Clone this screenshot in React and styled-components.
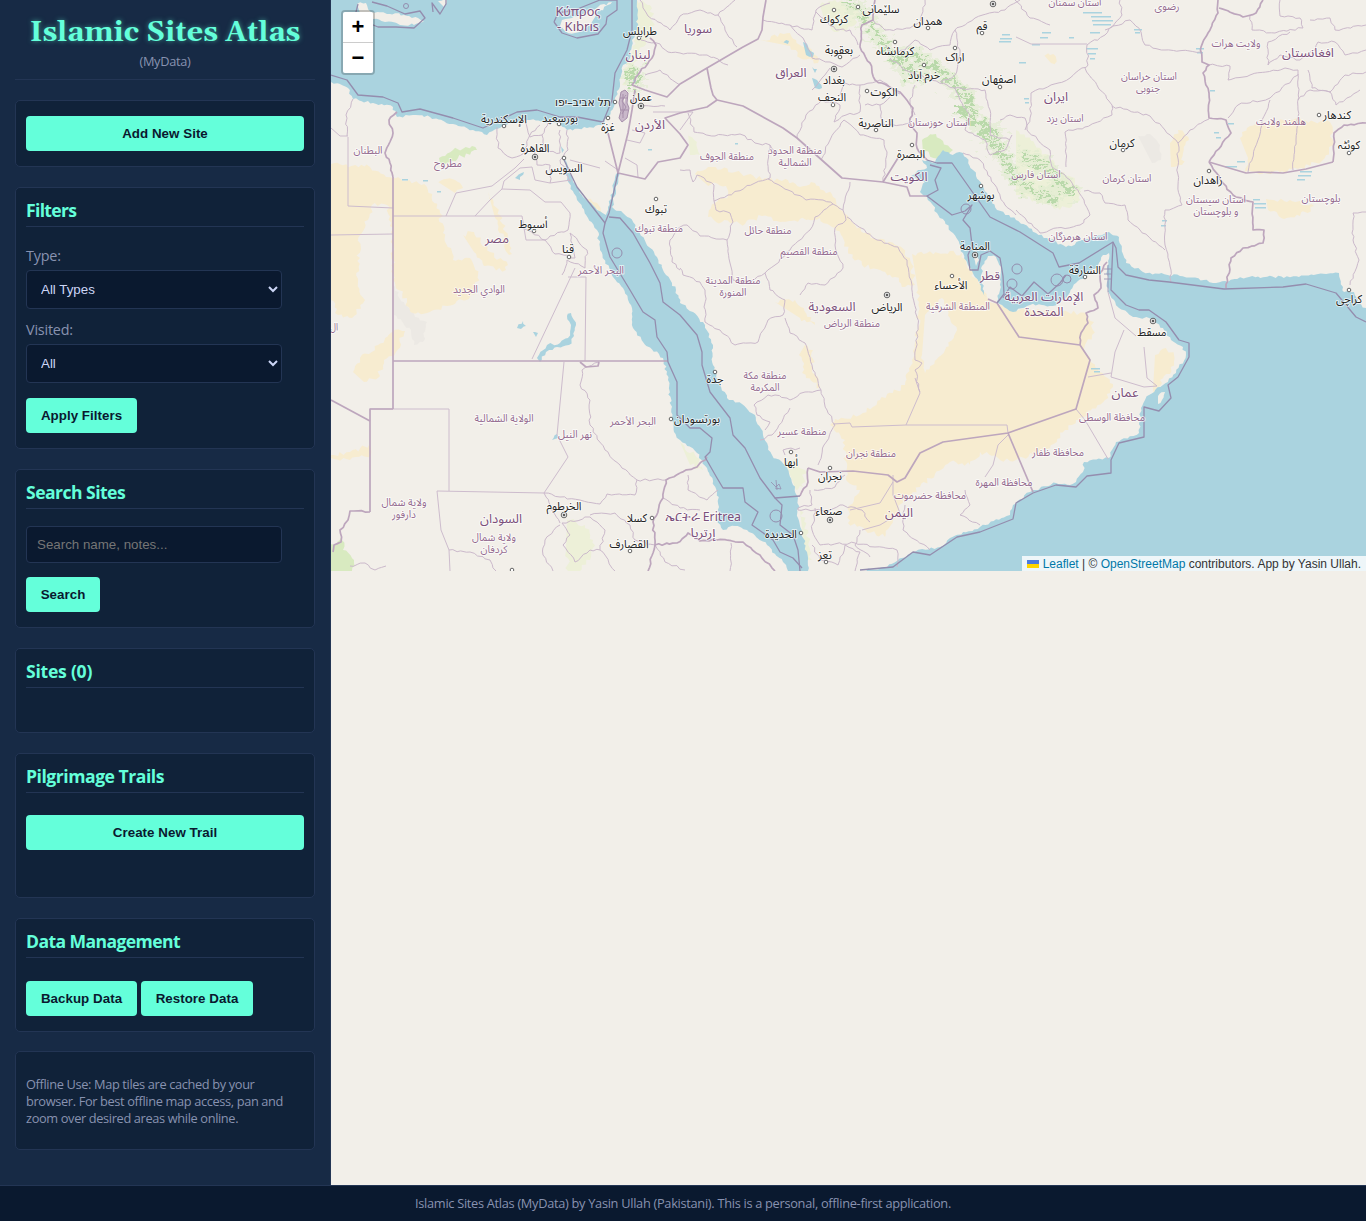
import React from 'react';
import styled, { createGlobalStyle, css } from 'styled-components';

const color = {
  ink: '#0a192f',
  panel: '#172a45',
  card: '#102239',
  line: '#233554',
  mint: '#64ffda',
  slate: '#8892b0',
  light: '#ccd6f6',
  land: '#f2efe9',
  water: '#aad3df',
};

const GlobalStyle = createGlobalStyle`
  *, *::before, *::after { box-sizing: border-box; }
  body { margin: 0; background: ${color.ink}; font-family: "Open Sans", "Noto Sans", sans-serif; }
`;

const Page = styled.div`
  display: flex;
  flex-direction: column;
  width: 1366px;
  height: 1221px;
`;
const Columns = styled.div`
  display: flex;
  height: 1185px;
`;
const Sidebar = styled.aside`
  width: 331px;
  padding: 0 15px;
  background: ${color.panel};
  border-right: 1px solid ${color.line};
`;
const Header = styled.header`
  height: 80px;
  margin-bottom: 20px;
  padding-top: 14px;
  text-align: center;
  border-bottom: 1px solid ${color.line};
`;
const Title = styled.h1`
  margin: 0;
  font: bold 28.8px/38px Gelasio, Georgia, "DejaVu Serif", serif;
  white-space: nowrap;
  color: ${color.mint};
  text-shadow: 0 0 5px rgba(100, 255, 218, 0.5);
`;
const Subtitle = styled.p`
  margin: 0;
  font-size: 12.8px;
  line-height: 18px;
  letter-spacing: -0.3px;
  color: ${color.slate};
`;
const Card = styled.section`
  height: ${(p) => p.$height}px;
  margin-bottom: ${(p) => p.$gap ?? 20}px;
  padding: 10px;
  background: ${color.card};
  border: 1px solid ${color.line};
  border-radius: 5px;
`;
const Heading = styled.h3`
  height: 29px;
  margin: 0;
  font-size: 17.6px;
  font-weight: 700;
  line-height: 25px;
  letter-spacing: ${(p) => p.$track ?? -0.55}px;
  color: ${color.mint};
  border-bottom: 1px solid ${color.line};
`;
const Label = styled.label`
  display: block;
  height: 20px;
  margin-top: ${(p) => p.$top}px;
  font-size: 14.4px;
  line-height: 20px;
  letter-spacing: -0.2px;
  color: ${color.slate};
`;
const field = css`
  display: block;
  width: 256px;
  font: 13.333px "Liberation Sans", Arial, sans-serif;
  color: ${color.light};
  background: ${color.ink};
  border: 1px solid ${color.line};
  border-radius: 4px;
`;
const Select = styled.select`
  ${field}
  height: 39px;
  margin-top: 4px;
  padding: 10px;
`;
const Input = styled.input`
  ${field}
  height: 37px;
  margin-top: 17px;
  padding: 10px;
  &::placeholder { color: #757575; }
`;
const Button = styled.button`
  display: block;
  width: ${(p) => (p.$width ? `${p.$width}px` : '100%')};
  height: 35px;
  margin-top: ${(p) => p.$top ?? 0}px;
  padding: 0;
  font: bold 13.333px "Liberation Sans", Arial, sans-serif;
  letter-spacing: 0.04px;
  white-space: nowrap;
  color: ${color.ink};
  background: ${color.mint};
  border: 0;
  border-radius: 4px;
`;
const ButtonRow = styled.div`
  display: flex;
  gap: 4px;
`;
const Note = styled.p`
  margin: 14px 0 0;
  font-size: 12.8px;
  line-height: 17px;
  letter-spacing: -0.36px;
  white-space: nowrap;
  color: ${color.slate};
`;
const MapPane = styled.main`
  flex: 1;
  background: ${color.land};
`;
const MapView = styled.div`
  position: relative;
  width: 1035px;
  height: 571px;
  overflow: hidden;
`;
const MapSvg = styled.svg`
  display: block;
`;
const ZoomBox = styled.div`
  position: absolute;
  top: 10px;
  left: 10px;
  width: 34px;
  border: 2px solid rgba(0, 0, 0, 0.2);
  border-radius: 4px;
  background-clip: padding-box;
`;
const ZoomButton = styled.button`
  display: block;
  width: 30px;
  height: ${(p) => (p.$first ? 31 : 30)}px;
  padding: 0;
  font: bold 22px/30px "Liberation Sans", sans-serif;
  color: #000;
  background: #fff;
  border: 0;
  border-bottom: ${(p) => (p.$first ? '1px solid #ccc' : '0')};
  border-radius: ${(p) => (p.$first ? '2px 2px 0 0' : '0 0 2px 2px')};
`;
const Attribution = styled.div`
  position: absolute;
  right: 0;
  bottom: 0;
  height: 15px;
  padding: 0 5px;
  font: 12px/16px "Liberation Sans", Arial, sans-serif;
  white-space: nowrap;
  color: #333;
  background: rgba(255, 255, 255, 0.8);
`;
const MapLink = styled.a`
  color: #0078a8;
`;
const Flag = styled.svg`
  margin-right: 4px;
`;
const Footer = styled.footer`
  flex: 1;
  padding-top: 8px;
  text-align: center;
  font-size: 12.8px;
  line-height: 19px;
  letter-spacing: -0.3px;
  color: ${color.slate};
  background: ${color.ink};
  border-top: 1px solid ${color.line};
`;

const seas = [
  '331,0 637,0 638,10 637,27 632,40 630,58 623,65 620,83 615,103 608,117 602,125 587,128 567,130 560,124 547,123 530,120 517,123 503,125 487,135 473,130 453,124 430,117 413,115 397,117 393,107 373,103 353,99 348,88 331,82',
  '564,157 567,180 577,200 588,218 597,230 600,250 613,277 623,288 632,308 633,328 643,342 663,358 668,380 672,418 674,432 680,440 697,453 707,468 717,492 719,507 717,520 723,530 735,526 747,530 767,545 783,562 788,571 808,571 807,552 798,518 798,498 793,485 787,468 772,455 763,435 755,415 742,404 727,398 720,385 713,365 713,345 705,325 693,312 680,303 676,290 672,283 663,270 657,257 646,243 637,230 630,218 623,213 612,207 616,190 619,172 616,174 608,210 606,215 597,210 583,197 573,182 567,163',
  '860,571 887,567 913,552 940,547 950,538 980,527 1010,515 1013,505 1030,492 1036,490 1056,483 1070,485 1076,482 1083,472 1084,462 1109,458 1116,442 1139,433 1141,408 1149,395 1163,385 1176,373 1186,355 1183,347 1171,340 1163,328 1149,318 1136,317 1119,308 1108,292 1107,267 1109,253 1103,255 1099,263 1086,277 1076,283 1066,298 1053,306 1030,305 1013,312 1002,305 997,302 1000,290 1001,270 996,257 988,256 982,266 981,280 986,297 975,277 963,253 953,233 937,213 927,197 920,192 925,182 911,176 918,170 927,168 922,160 935,162 943,150 950,154 963,153 973,170 987,193 997,210 1016,220 1036,233 1066,247 1093,237 1109,232 1119,237 1126,263 1143,272 1180,276 1216,283 1249,277 1299,277 1339,273 1343,287 1344,292 1354,292 1358,303 1366,308 1366,571',
];
const islands = [
  '357,4 366,3 371,12 390,14 404,15 418,18 424,21 414,25 400,25 385,22 373,19 360,13',
  '562,20 572,18 585,12 612,2 596,14 592,22 586,28 575,33 565,31 560,26',
  '1158,396 1165,392 1162,400 1158,404',
  '438,1 447,0 444,7', '976,250 979,260 976,266 974,258',
];
const sands = [
  '331,164 370,167 393,178 398,177 427,187 440,213 443,233 453,260 470,258 478,275 474,295 427,313 410,315 407,302 393,280 393,235 387,205 372,205 368,220 360,235 358,282 365,300 352,318 338,315 331,300',
  '331,455 350,452 369,445 371,455 350,460 331,458',
  '353,372 360,358 378,345 392,332 405,331 396,352 384,360 378,378 364,382',
  '463,235 474,232 490,252 508,265 506,270 484,266 474,252',
  '488,192 500,215 512,254 509,255 495,218',
  '435,180 455,180 463,188 455,193',
  '586,195 593,202 603,213 598,212 590,205',
  '760,40 790,33 800,45 812,50 818,63 800,58 790,46',
  '695,174 712,167 735,172 768,179 788,180 800,187 815,183 833,197 847,215 855,225 877,240 898,246 910,258 915,285 905,287 895,277 880,270 862,265 848,250 835,228 820,218 800,219 780,222 762,216 745,224 722,222 708,217 715,203 728,195 726,186 705,183',
  '912,254 962,253 975,278 990,302 1019,310 1086,313 1094,322 1092,335 1085,345 1090,360 1113,384 1105,400 1076,420 1065,430 1050,448 1016,460 1000,460 980,452 970,465 950,462 935,474 920,487 903,500 893,520 885,537 865,530 848,523 850,505 860,490 846,480 845,440 830,425 835,419 860,415 880,400 905,385 912,360 918,330 918,290',
  '1240,138 1250,126 1290,120 1330,122 1333,145 1322,161 1298,169 1280,172 1245,172 1248,158',
  '1266,199 1290,200 1314,206 1300,216 1284,219 1268,210',
  '1170,143 1178,130 1184,133 1189,140 1183,153 1182,165 1171,167',
  '1042,53 1050,55 1061,61 1051,63', '1155,355 1166,348 1174,355 1170,374 1160,380 1158,394 1153,390',
  '805,345 813,350 812,370 820,388 806,378 799,355',
  '775,302 795,300 815,325 800,318',
];
const greens = [
  '439,158 453,150 472,146 477,150 458,158 440,163',
  '922,140 936,134 943,141 953,150 940,158 923,152',
  '331,548 341,537 343,550 354,560 352,571 331,571',
];
const paleGreens = [
  '567,520 585,525 593,540 590,560 580,571 568,571 566,550',
  '785,462 795,458 805,470 803,487 796,490', '688,132 697,142 700,155 690,155',
  '680,442 695,455 703,470 690,465', '800,510 808,530 812,560 805,555',
  '637,0 650,5 655,25 645,40 638,60 628,80 622,85 628,60 636,35', '820,5 835,0 860,8 855,25 838,32 825,22',
  '1016,130 1040,148 1055,165 1075,182 1080,200 1060,210 1035,200 1016,195',
];
const mountains = [
  '845,0 862,12 874,30 888,50 905,70 925,80',
  '895,60 915,55 935,68 950,80 968,98 975,118 990,140 1004,158 1016,180 1035,192 1060,200',
  '960,110 980,125 995,130 1002,150', '1020,155 1045,165 1055,180 1075,195', '625,78 634,70 638,80 630,88',
];

const countryBorders = [
  '393,409 370,409 370,512', '393,177 393,409',
  '393,361 668,361', '580,362 586,367 598,366 599,362', '331,400 370,421',
  '608,133 618,173 628,133 632,110 635,90',
  '618,173 645,179 658,162 680,158 688,145 680,134 665,118 680,113 707,107 717,100',
  '717,100 713,95 711,88 707,68 680,84 667,97 645,90 632,85',
  '707,68 743,47 758,39 762,30 763,17 766,0',
  '717,100 743,106 783,128 797,138 842,178 883,182 898,158', '883,182 907,187 910,196 927,196',
  '1209,162 1246,173 1259,172 1283,173 1306,169 1333,162',
  '808,468 820,472 853,471 888,475 897,482 905,478 920,453 943,442 1008,433 1076,409 1090,360 1080,345 1019,337 997,303 988,299',
  '1008,433 1033,492',
];
const raggedBorders = [
  '397,112 389,120 393,133 385,153 390,163 393,177',
  '370,512 350,511 348,520 340,530 341,542 334,545 333,552',
  '632,85 640,72 652,58 656,45 650,38',
  '875,0 873,20 862,25 860,47 870,63 875,80 900,92 913,108 910,123 917,133 917,148 927,160',
  '1218,0 1218,13 1208,33 1201,47 1202,62 1209,65 1203,73 1209,93 1209,118 1226,120 1231,133 1209,162',
  '1333,162 1334,133 1344,125 1366,123',
  '1219,8 1243,17 1256,13 1263,0', '1209,162 1223,183 1233,195 1253,202 1253,230 1264,230 1263,243 1243,248 1231,258 1226,288',
  '800,496 808,482 808,468', '1080,345 1081,333 1088,323 1086,313 1098,308 1094,295 1101,288 1100,273 1107,262',
  '680,473 666,480 663,498 653,522 655,545 648,571', '707,457 697,467 680,473',
  '655,545 677,543 688,533 700,541 717,540 743,542 760,555 775,571',
];
const seaBorders = [
  '331,75 347,80 358,95 383,97 398,103 402,112 420,109 453,118 483,128 500,120 517,112 537,110 560,117 577,117 603,122 612,100 615,73 627,50 632,30 632,0',
  '358,4 356,12 366,22 378,27 396,27 414,28 425,18 420,11 405,14 387,6 372,2',
  '554,22 562,33 577,38 598,34 606,24 607,17 617,10 617,0 600,0 575,10 558,13 554,22',
  '433,12 432,3 440,14 446,4 446,0',
  '564,160 577,187 605,223 609,213 618,173', '605,223 603,233 610,257 630,290 643,312 655,320 657,337 667,352 668,362 677,382 677,415 690,428 700,428 712,438 710,452 705,457 717,478 723,488 743,488 745,502 758,512 752,525 773,540 780,552 793,558 802,568',
  '609,217 620,218 633,233 650,263 660,283 663,302 680,315 697,335 702,352 702,365 710,392 730,418 733,435 745,448 760,478 775,498 800,496', '775,498 782,505 780,525 793,535 798,550 800,571',
  '927,160 937,163 952,163 990,217 1020,232 1053,253 1059,267 1079,263 1113,242 1116,248 1118,267 1126,275 1149,280 1169,282 1224,289 1283,287 1306,284 1336,293 1356,317 1366,322',
  '930,165 941,168 935,180 938,190 927,196 952,215 965,211 972,205 963,220 970,228 972,245 968,255 970,270 978,270 981,255 990,251 1000,258 1003,276 1004,294 997,303',
  '1003,298 1010,287 1022,296 1034,282 1048,294 1060,283 1066,275', '1113,242 1111,290 1126,305 1139,310 1149,310 1166,322 1179,340 1189,343 1189,357 1178,377 1168,385 1171,398 1159,411 1144,407 1144,437 1119,443 1111,460 1111,473 1087,476 1076,487 1056,485 1033,493 1016,503 1013,519 980,532 957,537 930,555 913,552 893,567 860,570',
];
const rings = [[617, 253, 5], [776, 516, 6], [966, 209, 5], [1017, 269, 5], [1012, 284, 5], [1057, 280, 6], [1067, 279, 4], [406, 6, 2.5]];
const straightProvinces = [
  '393,216 522,216 526,240 545,240', '331,235 393,234', '348,137 348,206 393,208', '331,128 340,136 348,136', '370,409 449,409 449,491',
  '437,491 544,493 568,457 557,435 564,362', '585,361 586,277 568,277', '532,359 567,285 575,268', '437,491 441,530 449,550 450,571',
  '446,216 456,193 492,186 515,168 524,159', '475,216 490,200 502,189 530,190 545,202 561,202 570,213', '502,189 504,181 520,168 532,167 535,180 550,183 571,180',
  '906,425 920,393 915,378', '906,425 852,427 850,423 833,424', '1008,433 1007,425 906,425', '1076,409 1085,420 1108,459', '1008,435 998,445 993,465 985,477',
  '1144,347 1147,378 1157,386 1144,387 1111,377 1115,352 1124,330', '1088,377 1111,373', '1108,292 1115,318 1136,336',
  '605,161 618,170', '570,160 600,168', '893,475 893,495 900,513 880,525 862,530', '893,482 880,503 850,510', '1016,37 1031,44 1087,44',
  '653,112 693,112 680,130', '632,130 645,133 640,143 627,140', '625,158 637,165 638,177',
];
const provinces = [
  '353,99 346,115 347,136', '497,127 498,148 512,158 524,153 530,135 540,125', '525,120 530,137 542,135 548,122', '542,135 545,150 560,153 560,130', '567,130 568,150 560,160 570,182', '535,150 537,165 550,165 550,183',
  '570,213 568,230 550,236 545,240 520,225', '545,240 555,254 575,258 570,233 587,250 585,268 567,260 562,275',
  '640,0 648,16 670,30 680,16', '641,40 660,44 668,52 680,53', '645,75 660,70 680,85', '637,105 665,106',
  '680,16 700,10 718,15 735,0', '718,15 725,30 737,47', '680,53 707,55 728,65',
  '763,20 790,25 805,42 812,58 830,62 842,67 860,55', '790,25 812,30 816,10 830,3', '816,12 836,30 850,30 858,45',
  '812,90 822,78 830,68', '822,100 806,115 797,138', '822,100 840,105 834,122 846,115 860,112 860,85 845,83 840,95', '821,160 830,140 844,120 860,135 884,140 887,152 883,182',
  '860,85 880,80 900,94', '880,105 882,125 900,125 910,123', '865,105 880,105 890,97',
  '688,113 694,132 715,136 740,134 755,143 770,145 776,152', '770,145 768,160 770,178 755,183 728,195 714,201 714,185 697,175 693,182 690,170 680,170',
  '768,179 788,190 806,200 823,200 833,204 843,210 850,182', '714,201 716,210 730,213 733,222 727,240 700,236 687,225 680,227 670,240 672,262 680,270',
  '833,204 815,217 810,230 790,250 775,265 765,273 750,282 733,280 730,263 727,240', '843,210 846,220 835,228 835,245 843,268 825,285 808,283 800,295',
  '847,217 877,240 898,247 907,260 912,285 918,325 915,360 922,363 915,370 920,392', '680,268 683,275 700,282 705,290 705,322 720,330 735,345 758,342 768,320 783,315 785,300 770,290 765,273',
  '785,318 790,333 805,343 812,365 821,390 805,392 790,400 775,395 768,395 754,405 757,415 770,422 765,430', '821,390 827,410 835,425 824,445 818,465', '760,440 772,435 790,408', '785,455 783,450 800,448',
  '1015,0 1030,18 1050,25', '873,20 885,30 910,28 921,20 925,0', '885,45 890,55 905,50 915,40 930,50 950,45 955,30 975,18 1005,10 1020,0', '955,30 960,55 955,75 940,82', '890,58 905,70 925,78 955,88 960,100 970,115 965,130 985,140 990,155 1005,150 1012,135',
  '915,85 910,103 915,115', '955,88 985,90 990,110 990,135 1010,140', '1000,120 1010,115 1025,118 1027,130 1050,150 1052,167 1070,180 1084,200 1090,215 1080,225 1050,230 1040,233 1016,210',
  '963,153 980,160 995,185 1005,205 1016,215',
  '1120,0 1122,15 1105,35 1087,45 1088,65 1070,78 1031,93 1030,118 1025,130', '1105,30 1130,20 1141,32 1145,45 1165,50 1200,52', '1085,68 1112,105 1112,115 1085,127 1065,132 1066,167', '1112,106 1150,116 1165,130 1178,143 1190,130 1209,119', '1178,143 1178,185 1182,205 1165,210 1165,245 1171,270 1171,282', '1084,191 1100,193 1105,203 1125,205 1128,220 1140,230 1165,250',
  '1209,65 1230,66 1228,80 1250,75 1285,68 1298,70 1298,75 1270,98 1238,105 1228,118', '1250,15 1252,30 1275,33 1303,28 1300,18 1280,16 1280,0', '1290,32 1268,42 1268,65 1280,55 1300,60 1315,50 1318,42 1335,42 1345,55 1366,50', '1270,100 1262,120 1258,140 1248,172', '1298,74 1298,110 1296,140 1293,170', '1298,100 1310,90 1330,92 1336,105 1360,90', '1308,70 1312,88 1330,92 1345,75 1366,72', '1310,20 1330,18 1335,30 1366,25', '1366,212 1353,213 1353,240 1359,260 1350,285',
  '544,493 560,497 580,500 600,504 607,494 635,495 637,480', '599,362 582,370 580,385 590,400 590,425 605,450 620,465 637,480 666,480', '544,493 560,523', '562,523 590,517 605,530 600,550 615,571', '590,515 615,513 630,525 635,540 655,545', '560,525 545,540 543,555 553,571', '562,523 570,535 563,545 575,562 590,550 600,550', '449,550 470,552 490,560 496,571', '350,566 365,563 375,570 386,566',
  '663,498 680,508 700,510', '655,545 665,562 685,570', '688,475 688,490 707,500 718,490', '731,543 730,571', '810,490 812,505 798,508 798,510 830,510 840,505 862,510 870,522', '814,490 835,487 845,475', '815,508 812,530 820,545 855,543 875,547 897,550 897,567', '812,545 820,560 838,565 845,545 860,552 855,571', '905,505 903,530 930,550', '965,490 970,505 960,515 980,525', '860,530 855,545 870,557',
];
const lakes = [
  '517,328 523,321 526,326 521,329', '533,332 538,333 536,337', '537,358 547,345 560,343 568,338 571,325 567,316 571,313 576,325 574,336 569,345 557,347 546,352 540,362', '552,440 557,434 558,438',
  '803,42 808,46 814,53 813,57 806,55', '812,78 817,80 822,88 815,88', '780,41 789,41 788,44', '515,178 524,172 520,180', '633,80 636,80 635,84', '812,67 817,69 815,73',
  '561,146 564,150 562,153',
];
const playas = [[1090, 12, 12], [1091, 16, 20], [1092, 20, 21], [1093, 24, 18], [1083, 12, 7], [1090, 32, 10], [1042, 32, 9], [1040, 37, 8], [1069, 37, 5], [1086, 48, 12], [1088, 53, 8], [1090, 58, 5], [1032, 44, 8], [1025, 102, 4], [1024, 98, 5], [1134, 29, 8], [1135, 32, 5], [1196, 48, 8], [1197, 52, 6], [1210, 90, 5], [1228, 123, 6], [1214, 132, 5], [1216, 137, 5], [1225, 166, 12], [1237, 161, 8], [1300, 171, 12], [1298, 175, 13], [1297, 179, 8], [1253, 199, 7], [1254, 203, 12], [1255, 207, 11], [1162, 220, 5], [1161, 225, 5], [1002, 34, 8], [1000, 38, 12], [999, 41, 12], [1091, 368, 9], [1094, 371, 6], [1019, 62, 7], [735, 143, 3], [648, 149, 4], [402, 179, 6], [423, 180, 5], [437, 191, 4]];

/* [text, centre x, centre y, width] */
const countries = [
  ['Κύπρος', 578, 12, 45], ['- Kıbrıs', 578, 27, 42], ['لبنان', 638, 55, 25], ['الأردن', 650, 125, 30], ['سوريا', 698, 29, 28], ['العراق', 791, 73, 31],
  ['ایران', 1056, 97, 24], ['افغانستان', 1308, 53, 52], ['الكويت', 909, 177, 37], ['قطر', 990, 276, 20], ['مصر', 497, 239, 24], ['السعودية', 832, 307, 47],
  ['الإمارات العربية', 1044, 297, 79], ['المتحدة', 1044, 312, 39], ['عمان', 1125, 393, 27], ['اليمن', 899, 513, 28], ['السودان', 501, 519, 42], ['ኤርትራ Eritrea', 703, 517, 76], ['إرتريا', 703, 533, 25],
];
const regions = [
  ['البطنان', 368, 151, 29], ['مطروح', 448, 164, 28], ['الوادي الجديد', 479, 290, 52], ['البحر الأحمر', 601, 271, 46], ['منطقة تبوك', 659, 229, 48], ['ال', 334, 328, 8],
  ['منطقة الجوف', 727, 157, 54], ['منطقة الحدود', 795, 151, 54], ['الشمالية', 795, 163, 33], ['منطقة حائل', 768, 231, 47], ['منطقة القصيم', 809, 252, 57], ['منطقة المدينة', 733, 281, 55], ['المنورة', 733, 293, 27],
  ['استان خوزستان', 939, 123, 62], ['استان سمنان', 1075, 3, 53], ['رضوی', 1167, 7, 25], ['ولايت هرات', 1236, 44, 49], ['استان خراسان', 1149, 77, 56], ['جنوبی', 1148, 89, 24], ['استان یزد', 1065, 119, 37],
  ['هلمند ولايت', 1281, 122, 50], ['استان فارس', 1036, 175, 49], ['استان کرمان', 1127, 179, 49], ['استان سیستان', 1216, 200, 60], ['و بلوچستان', 1216, 212, 45], ['بلوچستان', 1321, 199, 39], ['استان هرمزگان', 1078, 237, 59],
  ['منطقة الرياض', 852, 324, 56], ['المنطقة الشرقية', 958, 307, 64], ['منطقة مكة', 765, 376, 43], ['المكرمة', 765, 388, 29], ['منطقة عسير', 802, 432, 49], ['منطقة نجران', 871, 454, 50],
  ['محافظة حضرموت', 930, 496, 72], ['محافظة المهرة', 1004, 483, 57], ['محافظة ظفار', 1058, 453, 52], ['محافظة الوسطى', 1112, 418, 66], ['الولاية الشمالية', 504, 419, 59], ['نهر النيل', 575, 435, 34], ['البحر الأحمر', 633, 422, 46],
  ['ولاية شمال', 404, 503, 45], ['دارفور', 404, 515, 24], ['ولاية شمال', 494, 538, 44], ['كردفان', 494, 550, 27],
];
/* [text, centre x, centre y, width, dot x, dot y, is capital] */
const cities = [
  ['طرابلس', 640, 31, 34, 639, 38], ['תל אביב–יפו', 583, 102, 56, 615, 102], ['عمان', 641, 97, 22, 641, 106, 1], ['بورسعيد', 560, 118, 36, 559, 124], ['الإسكندرية', 504, 119, 46, 504, 126],
  ['القاهرة', 535, 148, 29, 535, 157, 1], ['السويس', 564, 168, 37, 564, 158], ['غزة', 608, 127, 14, 608, 118], ['تبوك', 656, 209, 22, 656, 199], ['أسيوط', 533, 224, 29, 534, 231], ['قنا', 568, 249, 12, 569, 257],
  ['كركوك', 834, 19, 28, 834, 10], ['سلێمانی', 881, 9, 37, 858, 7], ['همدان', 928, 21, 29, 928, 28], ['قم', 982, 26, 11, 982, 33], ['بعقوبة', 839, 50, 28, 840, 57], ['کرمانشاه', 895, 51, 38, 895, 42],
  ['اراک', 955, 57, 19, 955, 48], ['بغداد', 834, 80, 22, 834, 69, 1], ['خرم آباد', 924, 75, 32, 924, 65], ['اصفهان', 999, 79, 34, 1000, 87], ['النجف', 832, 97, 28, 833, 105], ['الكوت', 884, 92, 27, 867, 91],
  ['الناصرية', 876, 123, 35, 876, 130], ['البصرة', 911, 154, 28, 912, 145], ['بوشهر', 981, 195, 27, 981, 186], ['المنامة', 975, 246, 30, 975, 255, 1], ['الأحساء', 951, 285, 33, 952, 276],
  ['کرمان', 1122, 143, 25, 1123, 150], ['زاهدان', 1208, 180, 29, 1209, 171], ['کندهار', 1337, 115, 28, 1319, 115], ['کوئٹہ', 1349, 145, 22, 1349, 153], ['الشارقة', 1085, 270, 32, 1085, 277],
  ['الرياض', 887, 307, 31, 887, 295, 1], ['جدة', 715, 379, 17, 715, 372], ['بورتسودان', 697, 419, 46, 671, 419], ['أبها', 791, 462, 14, 791, 452], ['نجران', 830, 476, 24, 830, 468], ['صنعاء', 829, 511, 27, 830, 520, 1],
  ['الحديدة', 781, 534, 32, 801, 533], ['تعز', 825, 555, 14, 826, 562], ['مسقط', 1152, 332, 29, 1153, 321, 1], ['کراچی', 1349, 299, 26, 1349, 290], ['الخرطوم', 564, 506, 35, 564, 515, 1],
  ['كسلا', 637, 518, 20, 652, 518], ['القضارف', 629, 544, 39, 630, 551],
];

/* Splits every segment into short steps and pushes the new points sideways. */
const jag = (points, amount, step = 4) => {
  const pts = points.split(' ').map((p) => p.split(',').map(Number));
  let seed = Math.round(pts[0][0] * 31 + pts[0][1] * 17 + pts.length);
  const rand = () => {
    seed = (seed * 1103515245 + 12345) % 2147483648;
    return seed / 2147483648 - 0.5;
  };
  const out = [pts[0]];
  for (let i = 1; i < pts.length; i += 1) {
    const [ax, ay] = pts[i - 1];
    const [bx, by] = pts[i];
    const onEdge = (ax === bx && (ax === 331 || ax === 1366)) || (ay === by && (ay === 0 || ay === 571));
    const len = Math.hypot(bx - ax, by - ay);
    const n = onEdge ? 1 : Math.max(1, Math.round(len / step));
    for (let k = 1; k < n; k += 1) {
      const off = rand() * 2 * amount;
      const t = (k + rand() * 0.5) / n;
      out.push([ax + (bx - ax) * t - ((by - ay) / len) * off, ay + (by - ay) * t + ((bx - ax) / len) * off]);
    }
    out.push([bx, by]);
  }
  return out.map(([x, y]) => `${x.toFixed(1)},${y.toFixed(1)}`).join(' ');
};

const Lines = ({ items, rough, ...rest }) => (
  <g fill="none" strokeLinejoin="round" {...rest}>
    {items.map((p, i) => <polyline key={i} points={rough ? jag(p, rough) : p} />)}
  </g>
);
const Areas = ({ items, rough = 1.5, ...rest }) => (
  <g {...rest}>{items.map((p, i) => <polygon key={i} points={jag(p, rough, 3)} />)}</g>
);
const Labels = ({ items, size, ...rest }) => (
  <g fontSize={size} textAnchor="middle" stroke="#fff" strokeOpacity="0.65" strokeWidth="2" strokeLinejoin="round" paintOrder="stroke"
    fontFamily='"Noto Sans Arabic", "Noto Sans", "DejaVu Sans", sans-serif' {...rest}>
    {items.map(([text, x, y, w], i) => (
      <text key={i} x={x} y={y + size * 0.33} textLength={w} lengthAdjust="spacingAndGlyphs">{text}</text>
    ))}
  </g>
);

const AtlasMap = () => (
  <MapSvg width="1035" height="571" viewBox="331 0 1035 571">
    <defs>
      <filter id="shred" filterUnits="userSpaceOnUse" x="331" y="0" width="1035" height="571">
        <feTurbulence type="fractalNoise" baseFrequency="0.12 0.2" numOctaves="3" seed="9" />
        <feDisplacementMap in="SourceGraphic" scale="26" xChannelSelector="R" yChannelSelector="G" />
      </filter>
    </defs>
    <rect x="331" width="1035" height="571" fill={color.land} />
    <Areas items={sands} rough={2.5} fill="#f7ecd0" />
    <Areas items={['925,315 942,298 950,318 957,330 945,350 925,373 922,355']} fill={color.land} />
    <Areas items={['393,285 405,305 415,317 427,322 423,342 414,345 411,330 394,315', '1138,136 1150,134 1160,145 1161,160 1152,163']} fill="#ece9e4" />
    <Areas items={paleGreens} rough={3} fill="#edf0d8" />
    <Areas items={greens} rough={2.5} fill="#d8eac0" />
    <Lines items={mountains} stroke="#e1ecd0" strokeWidth="16" opacity="0.6" filter="url(#shred)" />
    <Lines items={mountains} stroke="#b9d9aa" strokeWidth="6" strokeDasharray="9 3 4 2" filter="url(#shred)" />
    <Areas items={seas} rough={1.4} fill={color.water} />
    <Areas items={islands} fill={color.land} />
    <Areas items={lakes} fill={color.water} />
    <g fill={color.water}>
      {playas.map(([x, y, w], i) => <rect key={i} x={x} y={y} width={w} height="1.5" />)}
    </g>
    <Lines items={straightProvinces} stroke="#cdbccd" strokeWidth="1" />
    <Lines items={provinces} rough={1.2} stroke="#cbb9cb" strokeWidth="1" />
    <Lines items={countryBorders} stroke="#bda6bd" strokeWidth="1.7" />
    <Lines items={raggedBorders} rough={1} stroke="#bda6bd" strokeWidth="1.7" />
    <Lines items={seaBorders} stroke="#948dae" strokeWidth="1.3" />
    <g fill="none" stroke="#948dae">
      {rings.map(([x, y, r], i) => <circle key={i} cx={x} cy={y} r={r} />)}
      <path fill="#c9b8ca" stroke="#a78fab" d="M621 92l4-2 3 3-1 10 2 5-2 10-5 4-3-4 2-7-2-8zM623 94v24M626 95l-4 6 4 6-4 7M620 98h7M620 110h8" />
      <path d="M771 482l5 5 3-3 2 5-6-1M776 480l1 10" strokeWidth="0.8" />
      <path d="M1108 265v27M1104 269h8M1104 274h8M1104 279h8" strokeWidth="0.8" />
    </g>
    <Labels items={regions} size={10.5} fill="#93698f" />
    <Labels items={countries} size={12.5} fill="#7b4f7b" />
    <g fill="#fff" stroke="#555" strokeWidth="0.9">
      {cities.map(([, , , , x, y, capital], i) => (
        <g key={i}>
          <circle cx={x} cy={y} r={capital ? 2.8 : 1.8} />
          {capital && <circle cx={x} cy={y} r="1" fill="#333" />}
        </g>
      ))}
      <circle cx="993" cy="4" r="2.8" />
      <circle cx="993" cy="4" r="1" fill="#333" />
      <circle cx="512" cy="570" r="1.8" />
    </g>
    <Labels items={cities} size={11.5} fill="#222" />
  </MapSvg>
);

export default function App() {
  return (
    <>
      <GlobalStyle />
      <Page>
        <Columns>
          <Sidebar>
            <Header>
              <Title>Islamic Sites Atlas</Title>
              <Subtitle>(MyData)</Subtitle>
            </Header>
            <Card $height={67}>
              <Button $top={5}>Add New Site</Button>
            </Card>
            <Card $height={262}>
              <Heading $track={-0.7}>Filters</Heading>
              <Label $top={19}>Type:</Label>
              <Select defaultValue="all"><option value="all">All Types</option></Select>
              <Label $top={11}>Visited:</Label>
              <Select defaultValue="all"><option value="all">All</option></Select>
              <Button $top={15} $width={111}>Apply Filters</Button>
            </Card>
            <Card $height={159}>
              <Heading>Search Sites</Heading>
              <Input placeholder="Search name, notes..." />
              <Button $top={14} $width={74}>Search</Button>
            </Card>
            <Card $height={85}>
              <Heading $track={-0.25}>Sites (0)</Heading>
            </Card>
            <Card $height={145}>
              <Heading $track={-0.48}>Pilgrimage Trails</Heading>
              <Button $top={22}>Create New Trail</Button>
            </Card>
            <Card $height={114} $gap={19}>
              <Heading $track={-0.6}>Data Management</Heading>
              <ButtonRow>
                <Button $top={23} $width={111}>Backup Data</Button>
                <Button $top={23} $width={112}>Restore Data</Button>
              </ButtonRow>
            </Card>
            <Card $height={99}>
              <Note>
                Offline Use: Map tiles are cached by your<br />
                browser. For best offline map access, pan and<br />
                zoom over desired areas while online.
              </Note>
            </Card>
          </Sidebar>
          <MapPane>
            <MapView>
              <AtlasMap />
              <ZoomBox>
                <ZoomButton $first>+</ZoomButton>
                <ZoomButton>−</ZoomButton>
              </ZoomBox>
              <Attribution>
                <Flag width="12" height="8" viewBox="0 0 12 8">
                  <rect width="12" height="4" fill="#4c7be1" />
                  <rect y="4" width="12" height="4" fill="#ffd500" />
                </Flag>
                <MapLink>Leaflet</MapLink> | © <MapLink>OpenStreetMap</MapLink> contributors. App by Yasin Ullah.
              </Attribution>
            </MapView>
          </MapPane>
        </Columns>
        <Footer>Islamic Sites Atlas (MyData) by Yasin Ullah (Pakistani). This is a personal, offline-first application.</Footer>
      </Page>
    </>
  );
}
